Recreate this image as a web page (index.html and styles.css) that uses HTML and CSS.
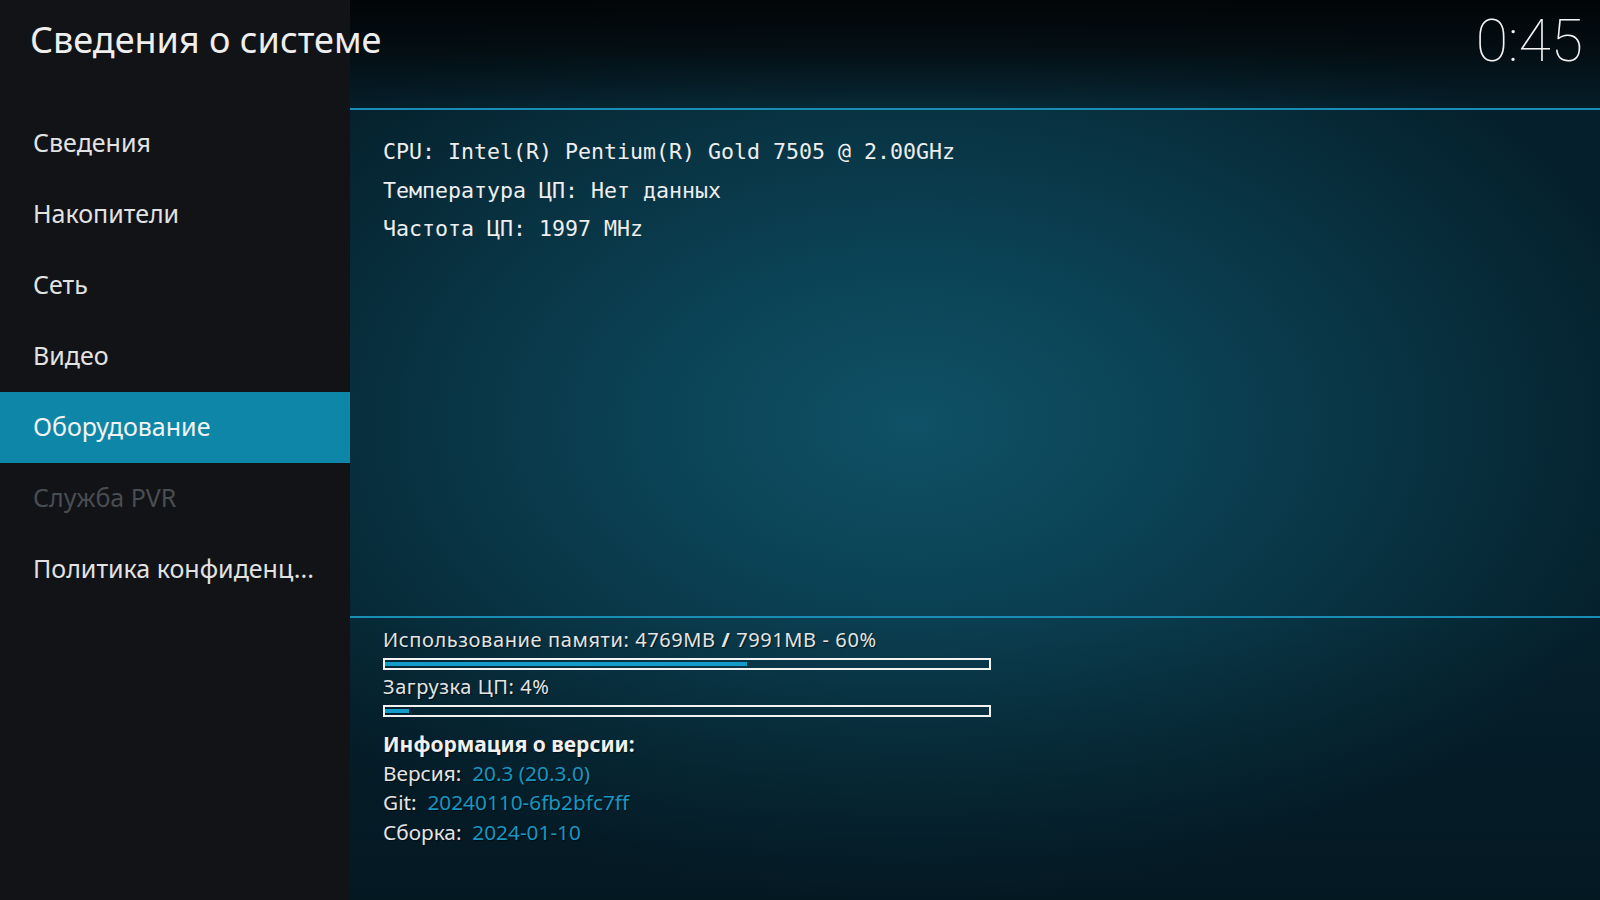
FILE: index.html
```html
<!DOCTYPE html>
<html lang="ru">
<head>
<meta charset="utf-8">
<title>Сведения о системе</title>
<link rel="stylesheet" href="styles.css">
</head>
<body>
<div class="screen">
	<div class="sidebar">
		<div class="title">Сведения о системе</div>
		<ul class="menu">
			<li>Сведения</li>
			<li>Накопители</li>
			<li>Сеть</li>
			<li>Видео</li>
			<li class="active">Оборудование</li>
			<li class="disabled">Служба PVR</li>
			<li>Политика конфиденц...</li>
		</ul>
	</div>
	<div class="main">
		<div class="topbar"><span class="clock">0:45</span></div>
		<div class="info">
			<p>CPU: Intel(R) Pentium(R) Gold 7505 @ 2.00GHz</p>
			<p>Температура ЦП: Нет данных</p>
			<p>Частота ЦП: 1997 MHz</p>
		</div>
		<div class="status">
			<div class="label">Использование памяти: 4769MB <b>/</b> 7991MB - 60%</div>
			<div class="bar"><div class="fill" style="width:60%"></div></div>
			<div class="label">Загрузка ЦП: 4%</div>
			<div class="bar"><div class="fill" style="width:4%"></div></div>
			<div class="version">
				<b>Информация о версии:</b>
				<div>Версия:&nbsp; <span class="val">20.3 (20.3.0)</span></div>
				<div>Git:&nbsp; <span class="val">20240110-6fb2bfc7ff</span></div>
				<div>Сборка:&nbsp; <span class="val">2024-01-10</span></div>
			</div>
		</div>
	</div>
</div>
</body>
</html>
```

FILE: styles.css
```css
html, body { margin: 0; padding: 0; }
body {
	width: 1600px;
	height: 900px;
	overflow: hidden;
	font-family: "Noto Sans", "Open Sans", sans-serif;
	color: #e8e8e8;
	background: #06222f;
}
.screen {
	display: grid;
	grid-template-columns: 350px 1fr;
	height: 900px;
	background:
		radial-gradient(ellipse 760px 480px at 57% 47%, #0f5166 0%, #0b4255 35%, #08303f 70%, #05202c 100%);
}

/* левая панель */
.sidebar {
	background: #111316;
}
.sidebar .title {
	position: relative;
	z-index: 2;
	height: 108px;
	box-sizing: border-box;
	padding: 13px 0 0 30px;
	font-size: 36px;
	line-height: 54px;
	color: #eeeeee;
	white-space: nowrap;
}
.menu {
	list-style: none;
	margin: 0;
	padding: 0;
}
.menu li {
	height: 71px;
	line-height: 69px;
	padding-left: 33px;
	font-size: 25px;
	color: #e2e2e2;
	white-space: nowrap;
}
.menu li.active { background: #0e86a8; color: #f2f2f2; }
.menu li.disabled { color: #4a4d51; }

/* правая часть */
.main {
	display: flex;
	flex-direction: column;
}
.topbar {
	height: 108px;
	border-bottom: 2px solid #1a8db5;
	display: flex;
	justify-content: flex-end;
	background: linear-gradient(#020507 0%, rgba(3,10,14,.85) 45%, rgba(5,25,34,.35) 100%);
}
.clock {
	font-family: Roboto, Lato, sans-serif;
	font-weight: 100;
	font-size: 59px;
	line-height: 82px;
	padding-right: 17px;
	color: #f4f4f4;
}
.info {
	flex: 1;
	padding: 23px 0 0 33px;
}
.info p {
	margin: 0;
	font-family: "DejaVu Sans Mono", "Liberation Mono", monospace;
	font-size: 21.6px;
	line-height: 38.7px;
	color: #eeeeee;
}

.status {
	border-top: 2px solid #1a8db5;
	padding: 9px 0 53px 33px;
	text-shadow: 1px 1px 1px rgba(0,0,0,.55);
	background: linear-gradient(rgba(0,0,0,0) 0%, rgba(2,10,16,.35) 100%);
}
.label {
	font-size: 20px;
	letter-spacing: .6px;
	line-height: 26px;
	height: 26px;
	white-space: nowrap;
	color: #e4e4e4;
}
.bar {
	width: 604px;
	height: 4px;
	padding: 2px 0;
	border: 2px solid #f2f2f2;
	margin: 5px 0 4px;
}
.bar .fill {
	height: 4px;
	background: #139ccb;
}
.bar + .label + .bar { margin-bottom: 13px; }
.version {
	font-size: 20.8px;
	line-height: 29.5px;
	color: #e4e4e4;
}
.version b {
	display: block;
	font-size: 21px;
	line-height: 29px;
	color: #f0f0f0;
}
.val { color: #1996c0; }
```
